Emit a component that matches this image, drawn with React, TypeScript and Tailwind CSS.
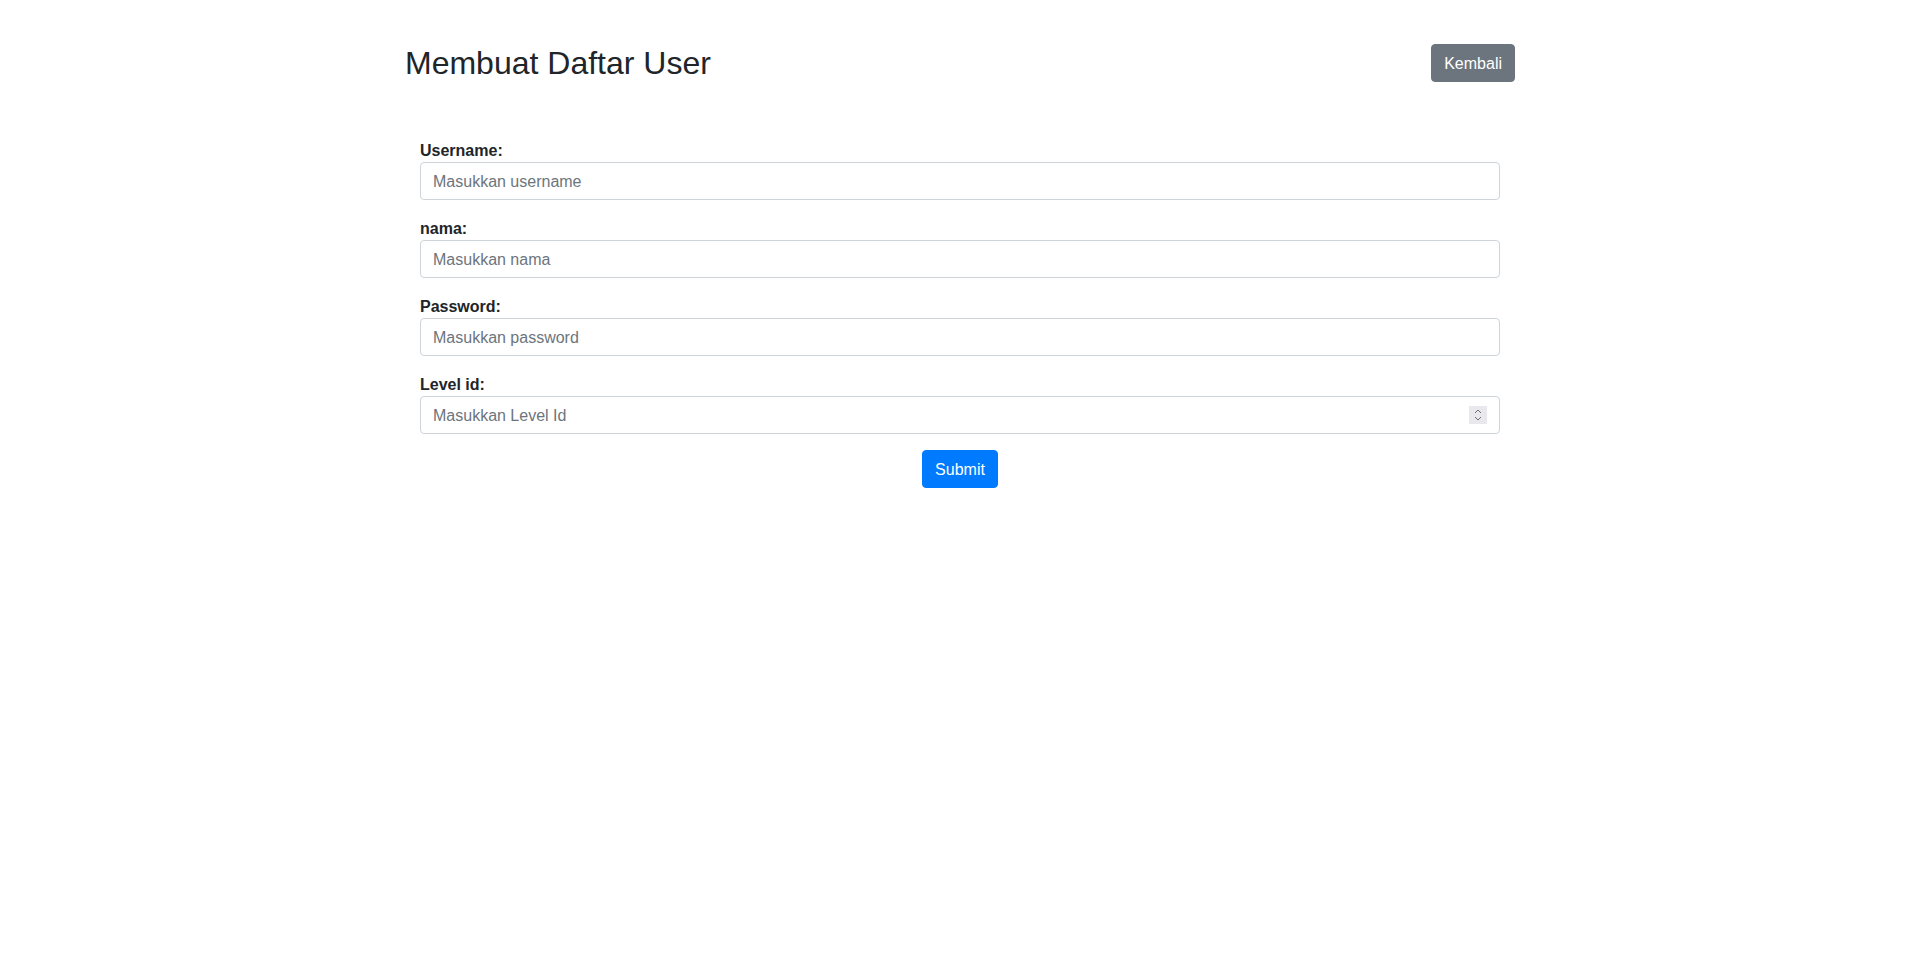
import { useState } from 'react';

// Form field with label on top
function Field({ label, placeholder, type = 'text', spinner = false }: {
  label: string;
  placeholder: string;
  type?: string;
  spinner?: boolean;
}) {
  const [value, setValue] = useState('');
  return (
    <div className="mb-[17px]">
      <label className="block font-bold text-base leading-[23px] text-[#212529]">{label}</label>
      <div className="relative">
        <input
          type={type}
          value={value}
          onChange={(e) => setValue(e.target.value)}
          placeholder={placeholder}
          className="block w-full h-[38px] px-3 pt-[7px] pb-[5px] text-base leading-6 text-[#495057] bg-white border border-[#ced4da] rounded placeholder:text-[#6c757d] outline-none"
        />
        {spinner && (
          <div className="absolute right-[13px] top-1/2 -translate-y-1/2 w-[18px] h-[18px] bg-[#e9e9ed] flex flex-col items-center justify-center">
            <svg width="8" height="14" viewBox="0 0 8 14" fill="none" stroke="#6f6f78" strokeWidth="1">
              <path d="M1 5 L4 2 L7 5" />
              <path d="M1 9 L4 12 L7 9" />
            </svg>
          </div>
        )}
      </div>
    </div>
  );
}

export default function App() {
  return (
    <div className="min-h-screen bg-white text-[#212529] font-['Liberation_Sans',Arial,sans-serif]">
      <div className="w-[1140px] mx-auto px-[15px] pt-[44px]">
        <div className="flex items-center justify-between">
          <h2 className="text-[32px] leading-[38px] font-normal">Membuat Daftar User</h2>
          <button className="h-[38px] px-3 pt-px text-base leading-6 text-white bg-[#6c757d] border border-[#6c757d] rounded">
            Kembali
          </button>
        </div>
        <form className="px-[15px] pt-[57px]" onSubmit={(e) => e.preventDefault()}>
          <Field label="Username:" placeholder="Masukkan username" />
          <Field label="nama:" placeholder="Masukkan nama" />
          <Field label="Password:" placeholder="Masukkan password" type="password" />
          <Field label="Level id:" placeholder="Masukkan Level Id" spinner />
          <div className="flex justify-center -mt-px">
            <button type="submit" className="h-[38px] px-3 pt-px text-base leading-6 text-white bg-[#007bff] border border-[#007bff] rounded">
              Submit
            </button>
          </div>
        </form>
      </div>
    </div>
  );
}
